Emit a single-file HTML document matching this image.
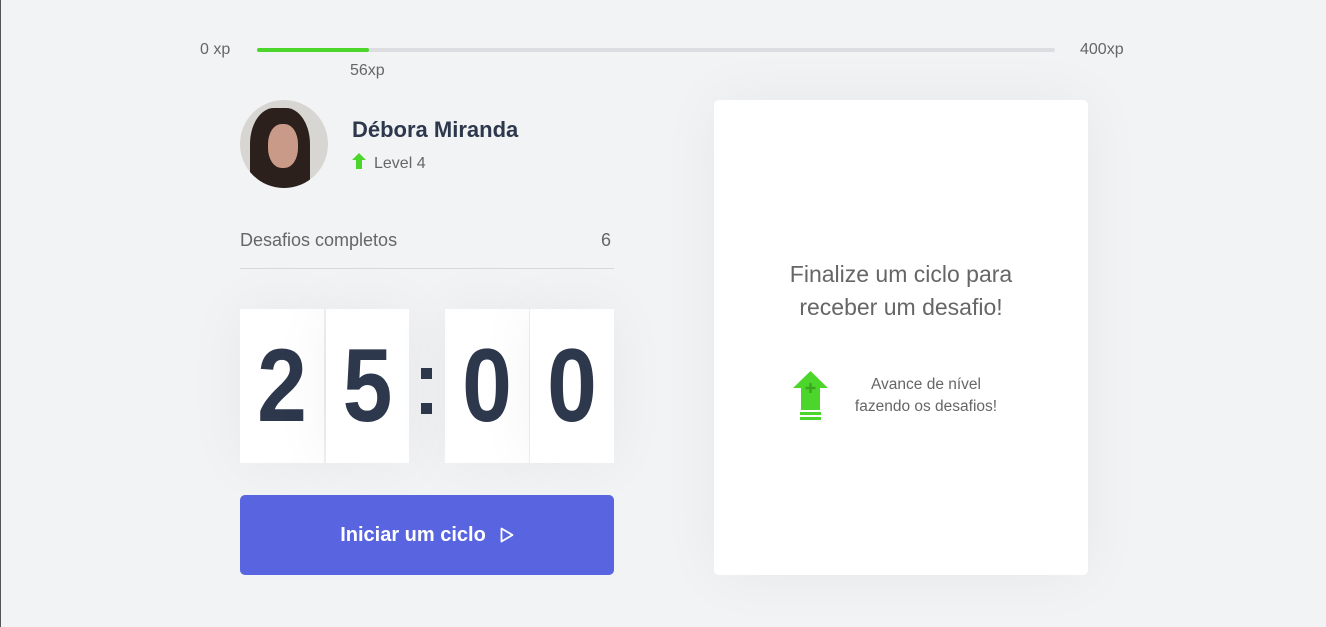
<!DOCTYPE html>
<html><head><meta charset="utf-8"><style>
*{margin:0;padding:0;box-sizing:border-box}
body{width:1326px;height:627px;background:#f2f3f5;font-family:"Liberation Sans",sans-serif;position:relative;overflow:hidden}
.a{position:absolute}
.lbl{font-size:16px;color:#666}
.card{background:#fff;box-shadow:0 0 60px rgba(0,0,0,0.05)}
.dig{position:absolute;top:309px;height:154px;width:84px;background:#fff;color:#2e384d;text-align:center;box-shadow:0 0 60px rgba(0,0,0,0.05)}
.dig span{display:block;font-size:104px;font-weight:bold;line-height:154px;transform:scaleX(0.86)}
</style></head><body>
<div class="a" style="left:0;top:0;width:1px;height:627px;background:#555"></div>
<div class="a lbl" style="left:200px;top:41px">0 xp</div>
<div class="a" style="left:257px;top:48px;width:798px;height:4px;background:#dcdde0;border-radius:2px"></div>
<div class="a" style="left:257px;top:48px;width:112px;height:4px;background:#4cd62b;border-radius:2px"></div>
<div class="a lbl" style="left:1080px;top:41px">400xp</div>
<div class="a lbl" style="left:350px;top:62px">56xp</div>

<div class="a" style="left:240px;top:100px;width:88px;height:88px;border-radius:50%;overflow:hidden;background:#d8d6d2">
<div class="a" style="left:10px;top:8px;width:60px;height:90px;border-radius:40% 40% 10% 10%;background:#2b201c"></div>
<div class="a" style="left:28px;top:24px;width:30px;height:44px;border-radius:45%;background:#c99a88"></div>
</div>
<div class="a" style="left:352px;top:117px;font-size:22px;font-weight:bold;color:#2e384d">Débora Miranda</div>
<svg class="a" style="left:352px;top:153px" width="14" height="16" viewBox="0 0 14 16"><path d="M7 0L14 7H10V16H4V7H0Z" fill="#4cd62b"/></svg>
<div class="a lbl" style="left:374px;top:155px">Level 4</div>

<div class="a" style="left:240px;top:230px;font-size:18px;color:#666">Desafios completos</div>
<div class="a" style="left:601px;top:230px;font-size:18px;color:#666">6</div>
<div class="a" style="left:240px;top:268px;width:374px;height:1px;background:#d7d8da"></div>

<div class="dig" style="left:240px"><span>2</span></div>
<div class="dig" style="left:326px;width:83px"><span>5</span></div>
<div class="a" style="left:421px;top:368px;width:11px;height:11px;background:#2e384d"></div>
<div class="a" style="left:421px;top:403px;width:11px;height:11px;background:#2e384d"></div>
<div class="dig" style="left:445px"><span>0</span></div>
<div class="dig" style="left:530px"><span>0</span></div>

<div class="a" style="left:240px;top:495px;width:374px;height:80px;background:#5965e0;border-radius:5px;color:#fff;font-size:20px;font-weight:bold;display:flex;align-items:center;justify-content:center">Iniciar um ciclo
<svg style="margin-left:14px" width="14" height="16" viewBox="0 0 14 16"><path d="M1.5 1.5L12.5 8L1.5 14.5Z" fill="none" stroke="#fff" stroke-width="1.8" stroke-linejoin="round"/></svg></div>

<div class="a card" style="left:714px;top:100px;width:374px;height:475px;border-radius:5px"></div>
<div class="a" style="left:714px;top:258px;width:374px;text-align:center;font-size:23px;color:#666;line-height:33px">Finalize um ciclo para<br>receber um desafio!</div>
<svg class="a" style="left:792px;top:370px" width="37" height="50" viewBox="0 0 37 50"><path d="M18.5 1L36 18H28V40H9V18H1Z" fill="#4cd62b"/><path d="M18.5 13v10M13.5 18h10" stroke="#3aa620" stroke-width="2.5"/><rect x="8" y="42" width="21" height="3" fill="#4cd62b"/><rect x="8" y="47" width="21" height="3" fill="#4cd62b"/></svg>
<div class="a" style="left:836px;top:374px;width:180px;text-align:center;font-size:15.5px;color:#666;line-height:22px">Avance de nível<br>fazendo os desafios!</div>
</body></html>
